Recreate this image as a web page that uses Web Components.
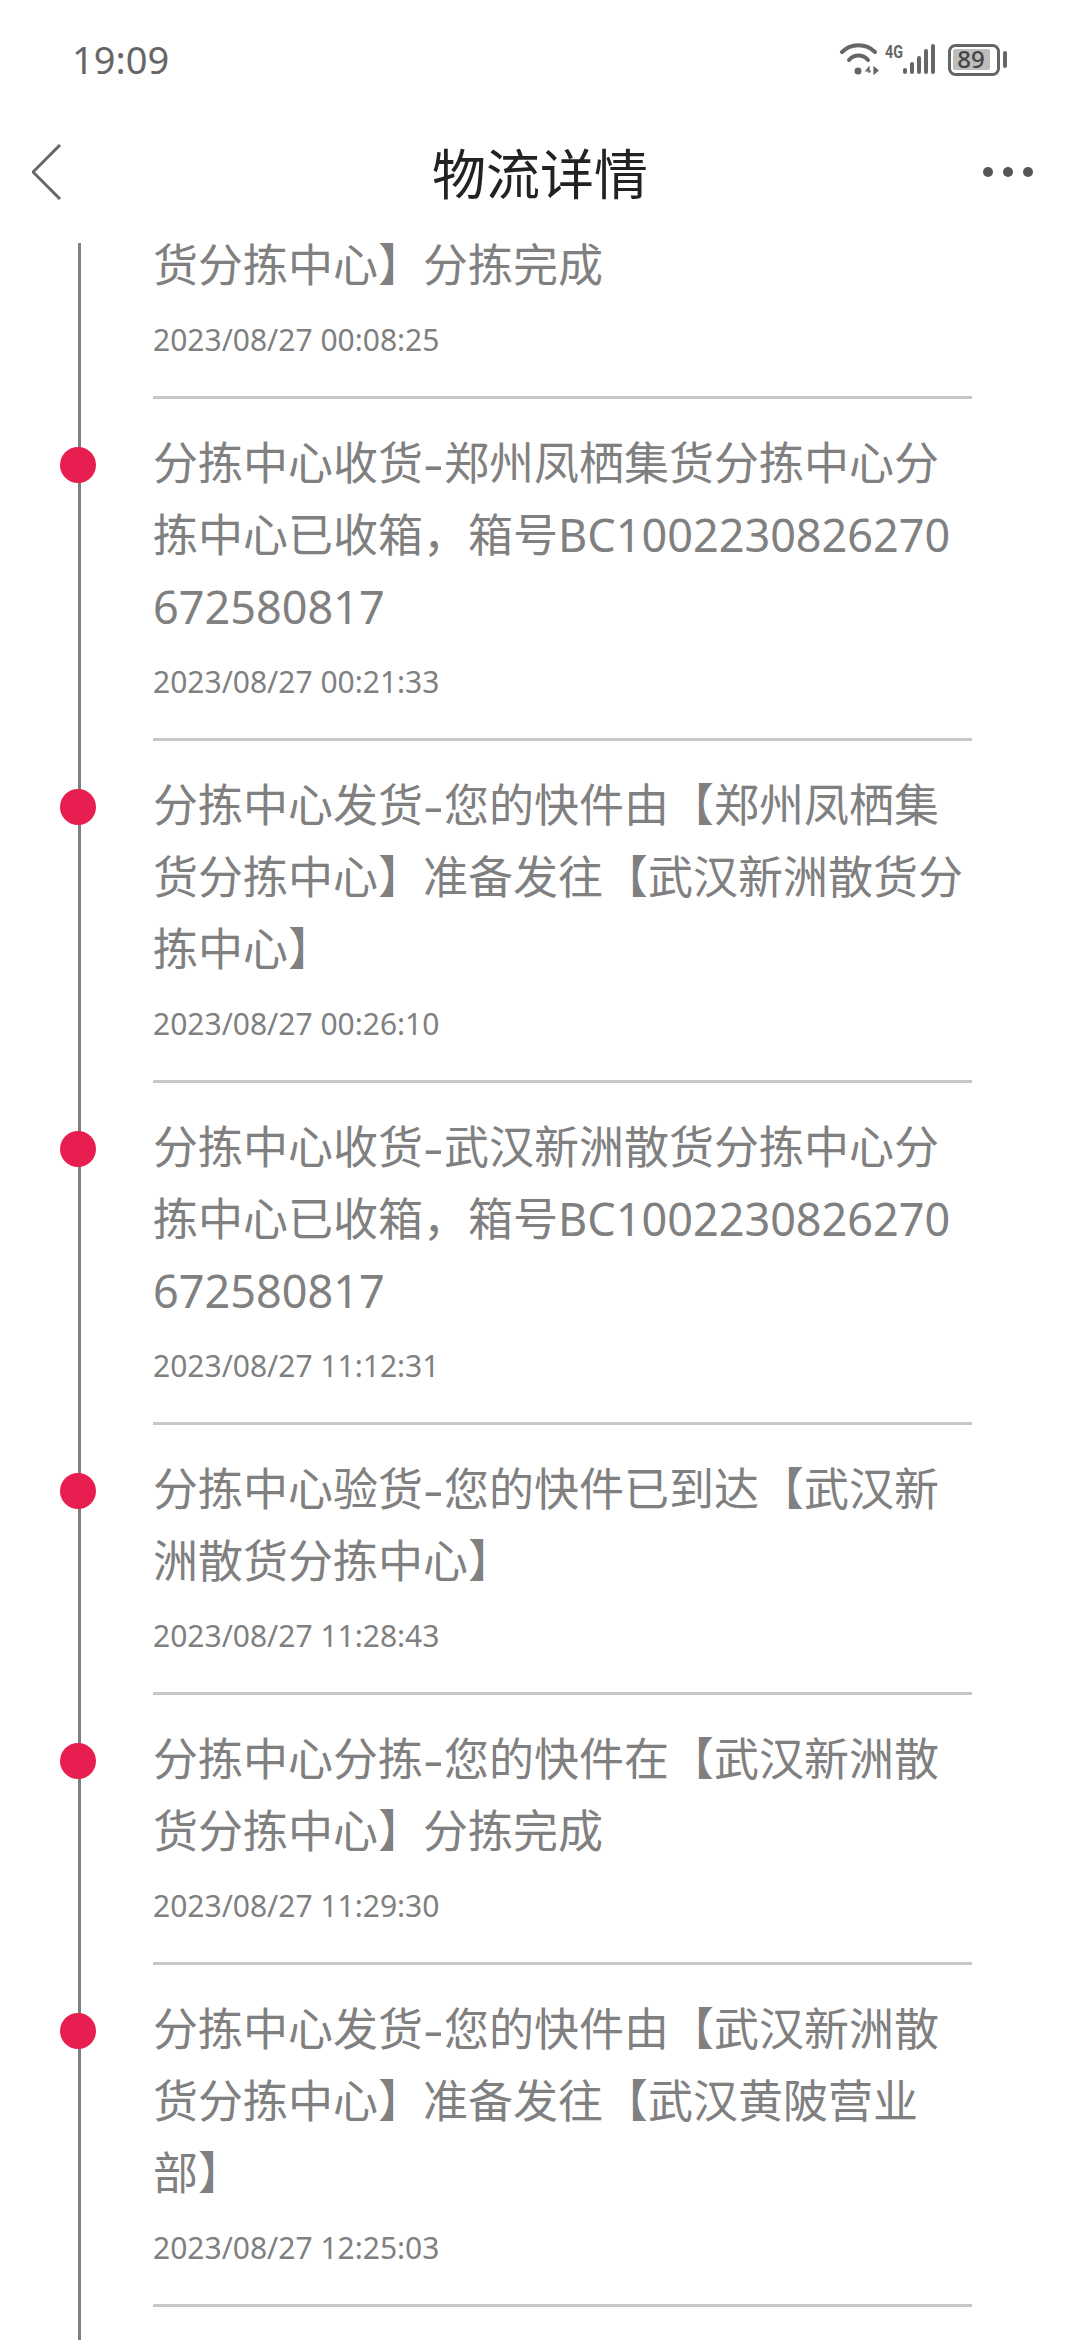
<!DOCTYPE html>
<html lang="zh">
<head>
<meta charset="utf-8">
<title>物流详情</title>
<style>
    html, body
    {
      margin: 0;
      height: 2340px;
      overflow: hidden;
      background: #fff;
      font-family: "Noto Sans", "Noto Sans CJK SC", sans-serif;
    }

    body
    {
      display: flex;
      flex-direction: column;
    }
</style>
</head>
<body>

<status-bar time="19:09" battery="89"></status-bar>
<nav-bar heading="物流详情"></nav-bar>

<track-list>
  <track-item continued date="2023/08/27 00:08:25">货分拣中心】分拣完成</track-item>
  <track-item date="2023/08/27 00:21:33">分拣中心收货<span class=dash>-</span>郑州凤栖集货分拣中心分<wbr>拣中心已收箱，箱号BC1002230826270672580817</track-item>
  <track-item date="2023/08/27 00:26:10">分拣中心发货<span class=dash>-</span>您的快件由【郑州凤栖集<wbr>货分拣中心】准备发往【武汉新洲散货分拣中心】</track-item>
  <track-item date="2023/08/27 11:12:31">分拣中心收货<span class=dash>-</span>武汉新洲散货分拣中心分<wbr>拣中心已收箱，箱号BC1002230826270672580817</track-item>
  <track-item date="2023/08/27 11:28:43">分拣中心验货<span class=dash>-</span>您的快件已到达【武汉新<wbr>洲散货分拣中心】</track-item>
  <track-item date="2023/08/27 11:29:30">分拣中心分拣<span class=dash>-</span>您的快件在【武汉新洲散<wbr>货分拣中心】分拣完成</track-item>
  <track-item date="2023/08/27 12:25:03">分拣中心发货<span class=dash>-</span>您的快件由【武汉新洲散<wbr>货分拣中心】准备发往【武汉黄陂营业部】</track-item>
</track-list>

<script>
(function(){

const statusTemplate = document.createElement('template');
statusTemplate.innerHTML = `
<style>
    :host
    {
      display: flex;
      flex: none;
      height: 100px;
      box-sizing: border-box;
      padding: 0 73px 0 72px;
      align-items: flex-start;
      justify-content: space-between;
      color: #666;
    }

    .time
    {
      font-family: "Noto Sans", sans-serif;
      font-size: 38px;
      line-height: 60px;
      margin-top: 29px;
    }

    svg
    {
      display: block;
      margin-top: 40px;
    }

    .tiny
    {
      font-family: "Roboto", sans-serif;
      font-size: 18px;
      font-weight: 700;
      fill: #666;
    }

    .level
    {
      font-family: "Noto Sans", sans-serif;
      font-size: 24px;
      font-weight: 500;
      fill: #444;
    }
</style>
<div class=time></div>
<svg width="170" height="38" viewBox="837 40 170 38">
  <g fill="none" stroke="#666" stroke-width="4" stroke-linecap="round">
    <path d="M842 52 C 851 43, 866 43, 875 52"/>
    <path d="M849 60 C 854 54, 863 54, 868 60"/>
  </g>
  <circle cx="858" cy="71" r="3.5" fill="#666"/>
  <path d="M869 73 L869 67 L866 71 L871 71 M874 67 L874 74 L878 70.5 Z" fill="#666" stroke="#666" stroke-width="1.2"/>
  <text class=tiny x="885" y="58" textLength="18" lengthAdjust="spacingAndGlyphs">4G</text>
  <g fill="#666">
    <rect x="903" y="68" width="4" height="6" rx="2"/>
    <rect x="910" y="62" width="4" height="12" rx="2"/>
    <rect x="917" y="56" width="4" height="18" rx="2"/>
    <rect x="924" y="49" width="4" height="25" rx="2"/>
    <rect x="931" y="44" width="4" height="30" rx="2"/>
  </g>
  <rect x="949.5" y="45.5" width="49" height="29" rx="6" fill="none" stroke="#666" stroke-width="3"/>
  <rect x="953" y="49" width="37" height="21" rx="2" fill="#bdbdbd"/>
  <text class=level x="971" y="68" text-anchor="middle"></text>
  <rect x="1003" y="51" width="4" height="17" rx="2" fill="#666"/>
</svg>`;

customElements.define('status-bar', class extends HTMLElement {
    constructor()
    {
        super();

        let shadowRoot = this.attachShadow({mode: 'open'});
        shadowRoot.appendChild(statusTemplate.content.cloneNode(true));

        this._time = shadowRoot.querySelector('.time');
        this._level = shadowRoot.querySelector('.level');
    }

    connectedCallback()
    {
      this._time.textContent = this.getAttribute('time');
      this._level.textContent = this.getAttribute('battery');
    }
});

const navTemplate = document.createElement('template');
navTemplate.innerHTML = `
<style>
    :host
    {
      display: grid;
      flex: none;
      height: 129px;
      box-sizing: border-box;
      padding: 14px 47px 0 32px;
      grid-template-columns: 100px 1fr 100px;
      align-items: center;
      color: #222;
    }

    .title
    {
      text-align: center;
      font-family: "Noto Sans CJK SC", sans-serif;
      font-size: 54px;
      line-height: 72px;
      padding-left: 15px;
    }

    .more
    {
      justify-self: end;
      display: flex;
      gap: 10px;
    }

    .more i
    {
      width: 10px;
      height: 10px;
      border-radius: 50%;
      background: #555;
    }

    svg
    {
      display: block;
    }
</style>
<svg width="30" height="56" viewBox="0 0 30 56">
  <path d="M28 1 L1 28 L28 55" fill="none" stroke="#666" stroke-width="3"/>
</svg>
<div class=title></div>
<div class=more><i></i><i></i><i></i></div>`;

customElements.define('nav-bar', class extends HTMLElement {
    constructor()
    {
        super();

        let shadowRoot = this.attachShadow({mode: 'open'});
        shadowRoot.appendChild(navTemplate.content.cloneNode(true));

        this._title = shadowRoot.querySelector('.title');
    }

    connectedCallback()
    {
      this._title.textContent = this.getAttribute('heading');
    }
});

const listTemplate = document.createElement('template');
listTemplate.innerHTML = `
<style>
    :host
    {
      display: flex;
      flex: 1;
      min-height: 0;
      overflow: hidden;
    }

    .rail
    {
      flex: 1;
      padding-left: 153px;
      padding-right: 108px;
      background: linear-gradient(#808080, #808080) 78px 14px / 3px 100% no-repeat;
    }
</style>
<div class=rail><slot></slot></div>`;

customElements.define('track-list', class extends HTMLElement {
    constructor()
    {
        super();

        let shadowRoot = this.attachShadow({mode: 'open'});
        shadowRoot.appendChild(listTemplate.content.cloneNode(true));
    }
});

const itemTemplate = document.createElement('template');
itemTemplate.innerHTML = `
<style>
    :host
    {
      display: block;
      position: relative;
      padding: 28px 0 36px;
      border-bottom: 3px solid #c8c8c8;
      color: #808080;
    }

    :host([continued])
    {
      padding-top: 0;
    }

    :host([continued]) .dot
    {
      display: none;
    }

    .dot
    {
      position: absolute;
      left: -93px;
      top: 48px;
      width: 36px;
      height: 36px;
      border-radius: 50%;
      background: #e91e50;
    }

    .text
    {
      font-size: 45px;
      line-height: 72px;
      word-break: break-all;
    }

    ::slotted(.dash)
    {
      display: inline-block;
      width: 21px;
      text-align: center;
      transform: scaleX(1.4);
    }

    .date
    {
      margin-top: 19px;
      font-size: 30px;
      line-height: 40px;
    }
</style>
<div class=dot></div>
<div class=text><slot></slot></div>
<div class=date></div>`;

customElements.define('track-item', class extends HTMLElement {
    constructor()
    {
        super();

        let shadowRoot = this.attachShadow({mode: 'open'});
        shadowRoot.appendChild(itemTemplate.content.cloneNode(true));

        this._date = shadowRoot.querySelector('.date');
    }

    connectedCallback()
    {
      this._date.textContent = this.getAttribute('date');
    }
});

})();
</script>
</body>
</html>
